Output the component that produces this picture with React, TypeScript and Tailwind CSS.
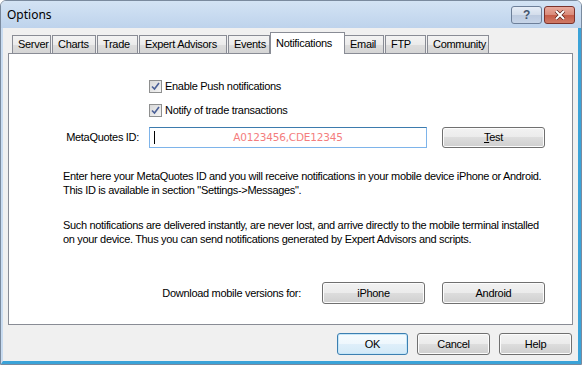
import React from 'react';

const font = { fontFamily: '"Liberation Sans", Arial, sans-serif' };

const tabs = [
  { label: 'Server', w: 'w-[39px]' },
  { label: 'Charts', w: 'w-[44px]' },
  { label: 'Trade', w: 'w-[41px]' },
  { label: 'Expert Advisors', w: 'w-[88px]' },
  { label: 'Events', w: 'w-[42px]' },
  { label: 'Notifications', w: 'w-[75px]', active: true },
  { label: 'Email', w: 'w-[40px]' },
  { label: 'FTP', w: 'w-[41px]' },
  { label: 'Community', w: 'w-[62px]' },
];

const Button = ({ children, className = '', focused = false }: { children: React.ReactNode; className?: string; focused?: boolean }) => (
  <div
    className={
      'flex items-center justify-center rounded-[3px] border text-[11px] text-black ' +
      (focused
        ? 'border-[#3c7fb1] bg-[linear-gradient(#f6fbfe_0%,#eef7fd_50%,#dfeffa_50%,#d3e9f7_100%)] shadow-[inset_0_0_0_1px_#c5e6f8] '
        : 'border-[#707070] bg-[linear-gradient(#f2f2f2_0%,#ebebeb_50%,#dddddd_50%,#cfcfcf_100%)] shadow-[inset_0_0_0_1px_#fcfcfc] ') +
      className
    }
  >
    {children}
  </div>
);

const Checkbox = ({ label }: { label: string }) => (
  <div className="flex h-[13px] items-center">
    <div className="flex h-[13px] w-[13px] items-center justify-center border border-[#8e8f8f] bg-[linear-gradient(135deg,#d8d8d8,#f4f4f4)]">
      <svg width="9" height="9" viewBox="0 0 9 9">
        <path d="M1 4.5 L3.5 7 L8 1" fill="none" stroke="#4a5f97" strokeWidth="1.6" />
      </svg>
    </div>
    <span className="ml-[3px] text-[11px] text-black">{label}</span>
  </div>
);

export default function App() {
  return (
    <div style={font} className="flex h-[365px] w-[582px] flex-col overflow-hidden rounded-t-[6px] border border-[#7a8a9e] bg-[#f0f0f0] tracking-[-0.3px]">
      {/* title bar */}
      <div className="flex h-[27px] shrink-0 items-center bg-[linear-gradient(#d3e3f4,#bed3ec)] pl-[6px] pr-[6px]">
        <span className="text-[12px] tracking-normal text-black" style={{ fontFamily: '"Noto Sans", "Open Sans", sans-serif' }}>Options</span>
        <div className="ml-auto flex items-center gap-[2px]">
          <div className="flex h-[18px] w-[31px] items-center justify-center rounded-[3px] border border-[#6d7f99] bg-[linear-gradient(#e6edf7_0%,#d3ddeb_50%,#bccadf_50%,#c7d5e8_100%)]">
            <span className="text-[12px] font-bold text-[#44556e]">?</span>
          </div>
          <div className="flex h-[18px] w-[31px] items-center justify-center rounded-[3px] border border-[#7b322b] bg-[linear-gradient(#e8a99c_0%,#d98a79_50%,#c55a46_50%,#cf7a66_100%)]">
            <svg width="12" height="10" viewBox="0 0 12 10">
              <path d="M2 1 L10 9 M10 1 L2 9" stroke="#5a231c" strokeWidth="3.4" />
              <path d="M2 1 L10 9 M10 1 L2 9" stroke="#ffffff" strokeWidth="2" />
            </svg>
          </div>
        </div>
      </div>

      {/* body */}
      <div className="flex flex-1 flex-col border-l-2 border-r-[3px] border-b-[3px] border-l-[#c9dcf1] border-r-[#3ba3d8] border-b-[#3ba3d8] pl-[5px] pr-[5px] pt-[4px]">
        {/* tabs */}
        <div className="relative z-10 flex h-[22px] items-start pl-[4px]">
          {tabs.map((t) =>
            t.active ? (
              <div key={t.label} className={`${t.w} mx-[-1px] flex h-[22px] items-start border border-b-0 border-[#898c95] bg-white pl-[5px] pt-[2px] text-[11px] text-black`}>
                {t.label}
              </div>
            ) : (
              <div key={t.label} className={`${t.w} mt-[3px] mr-px flex h-[18px] items-center border border-b-0 border-[#898c95] bg-[linear-gradient(#f3f3f3_0%,#ebebeb_50%,#dddddd_50%,#d5d5d5_100%)] pl-[5px] text-[11px] text-black`}>
                {t.label}
              </div>
            )
          )}
        </div>

        {/* panel */}
        <div className="-mt-px flex h-[272px] flex-col border border-[#898c95] bg-white pt-[26px]">
          <div className="ml-[140px]">
            <Checkbox label="Enable Push notifications" />
          </div>
          <div className="ml-[140px] mt-[11px]">
            <Checkbox label="Notify of trade transactions" />
          </div>

          <div className="mt-[10px] flex h-[21px] items-center">
            <span className="w-[130px] text-right text-[11px] text-black">MetaQuotes ID:</span>
            <div className="relative ml-[10px] flex h-[21px] w-[278px] items-center justify-center border border-[#7eb4ea] border-t-[#3d7bad] bg-white">
              <div className="absolute left-[4px] top-[3px] h-[13px] w-px bg-black" />
              <span className="text-[10.5px] tracking-[-0.2px] text-[#f47d7d]" style={{ fontFamily: '"DejaVu Sans", sans-serif' }}>A0123456,CDE12345</span>
            </div>
            <Button className="ml-[15px] h-[21px] w-[103px]">
              <span><span className="underline">T</span>est</span>
            </Button>
          </div>

          <div className="ml-[54px] mt-[21px] text-[11px] leading-[14px] tracking-[-0.33px] text-black">
            <p>Enter here your MetaQuotes ID and you will receive notifications in your mobile device iPhone or Android.</p>
            <p>This ID is available in section "Settings-&gt;Messages".</p>
          </div>
          <div className="ml-[54px] mt-[21px] text-[11px] leading-[14px] tracking-[-0.33px] text-black">
            <p>Such notifications are delivered instantly, are never lost, and arrive directly to the mobile terminal installed</p>
            <p>on your device. Thus you can send notifications generated by Expert Advisors and scripts.</p>
          </div>

          <div className="mt-[36px] flex h-[22px] items-center">
            <span className="w-[292px] text-right text-[11px] text-black">Download mobile versions for:</span>
            <Button className="ml-[21px] h-[22px] w-[103px]">iPhone</Button>
            <Button className="ml-[17px] h-[22px] w-[103px]">Android</Button>
          </div>
        </div>

        {/* bottom buttons */}
        <div className="mt-[8px] flex justify-end gap-[9px] pr-[1px]">
          <Button focused className="h-[22px] w-[71px]">OK</Button>
          <Button className="h-[22px] w-[73px]">Cancel</Button>
          <Button className="h-[22px] w-[73px]">Help</Button>
        </div>
      </div>
    </div>
  );
}
